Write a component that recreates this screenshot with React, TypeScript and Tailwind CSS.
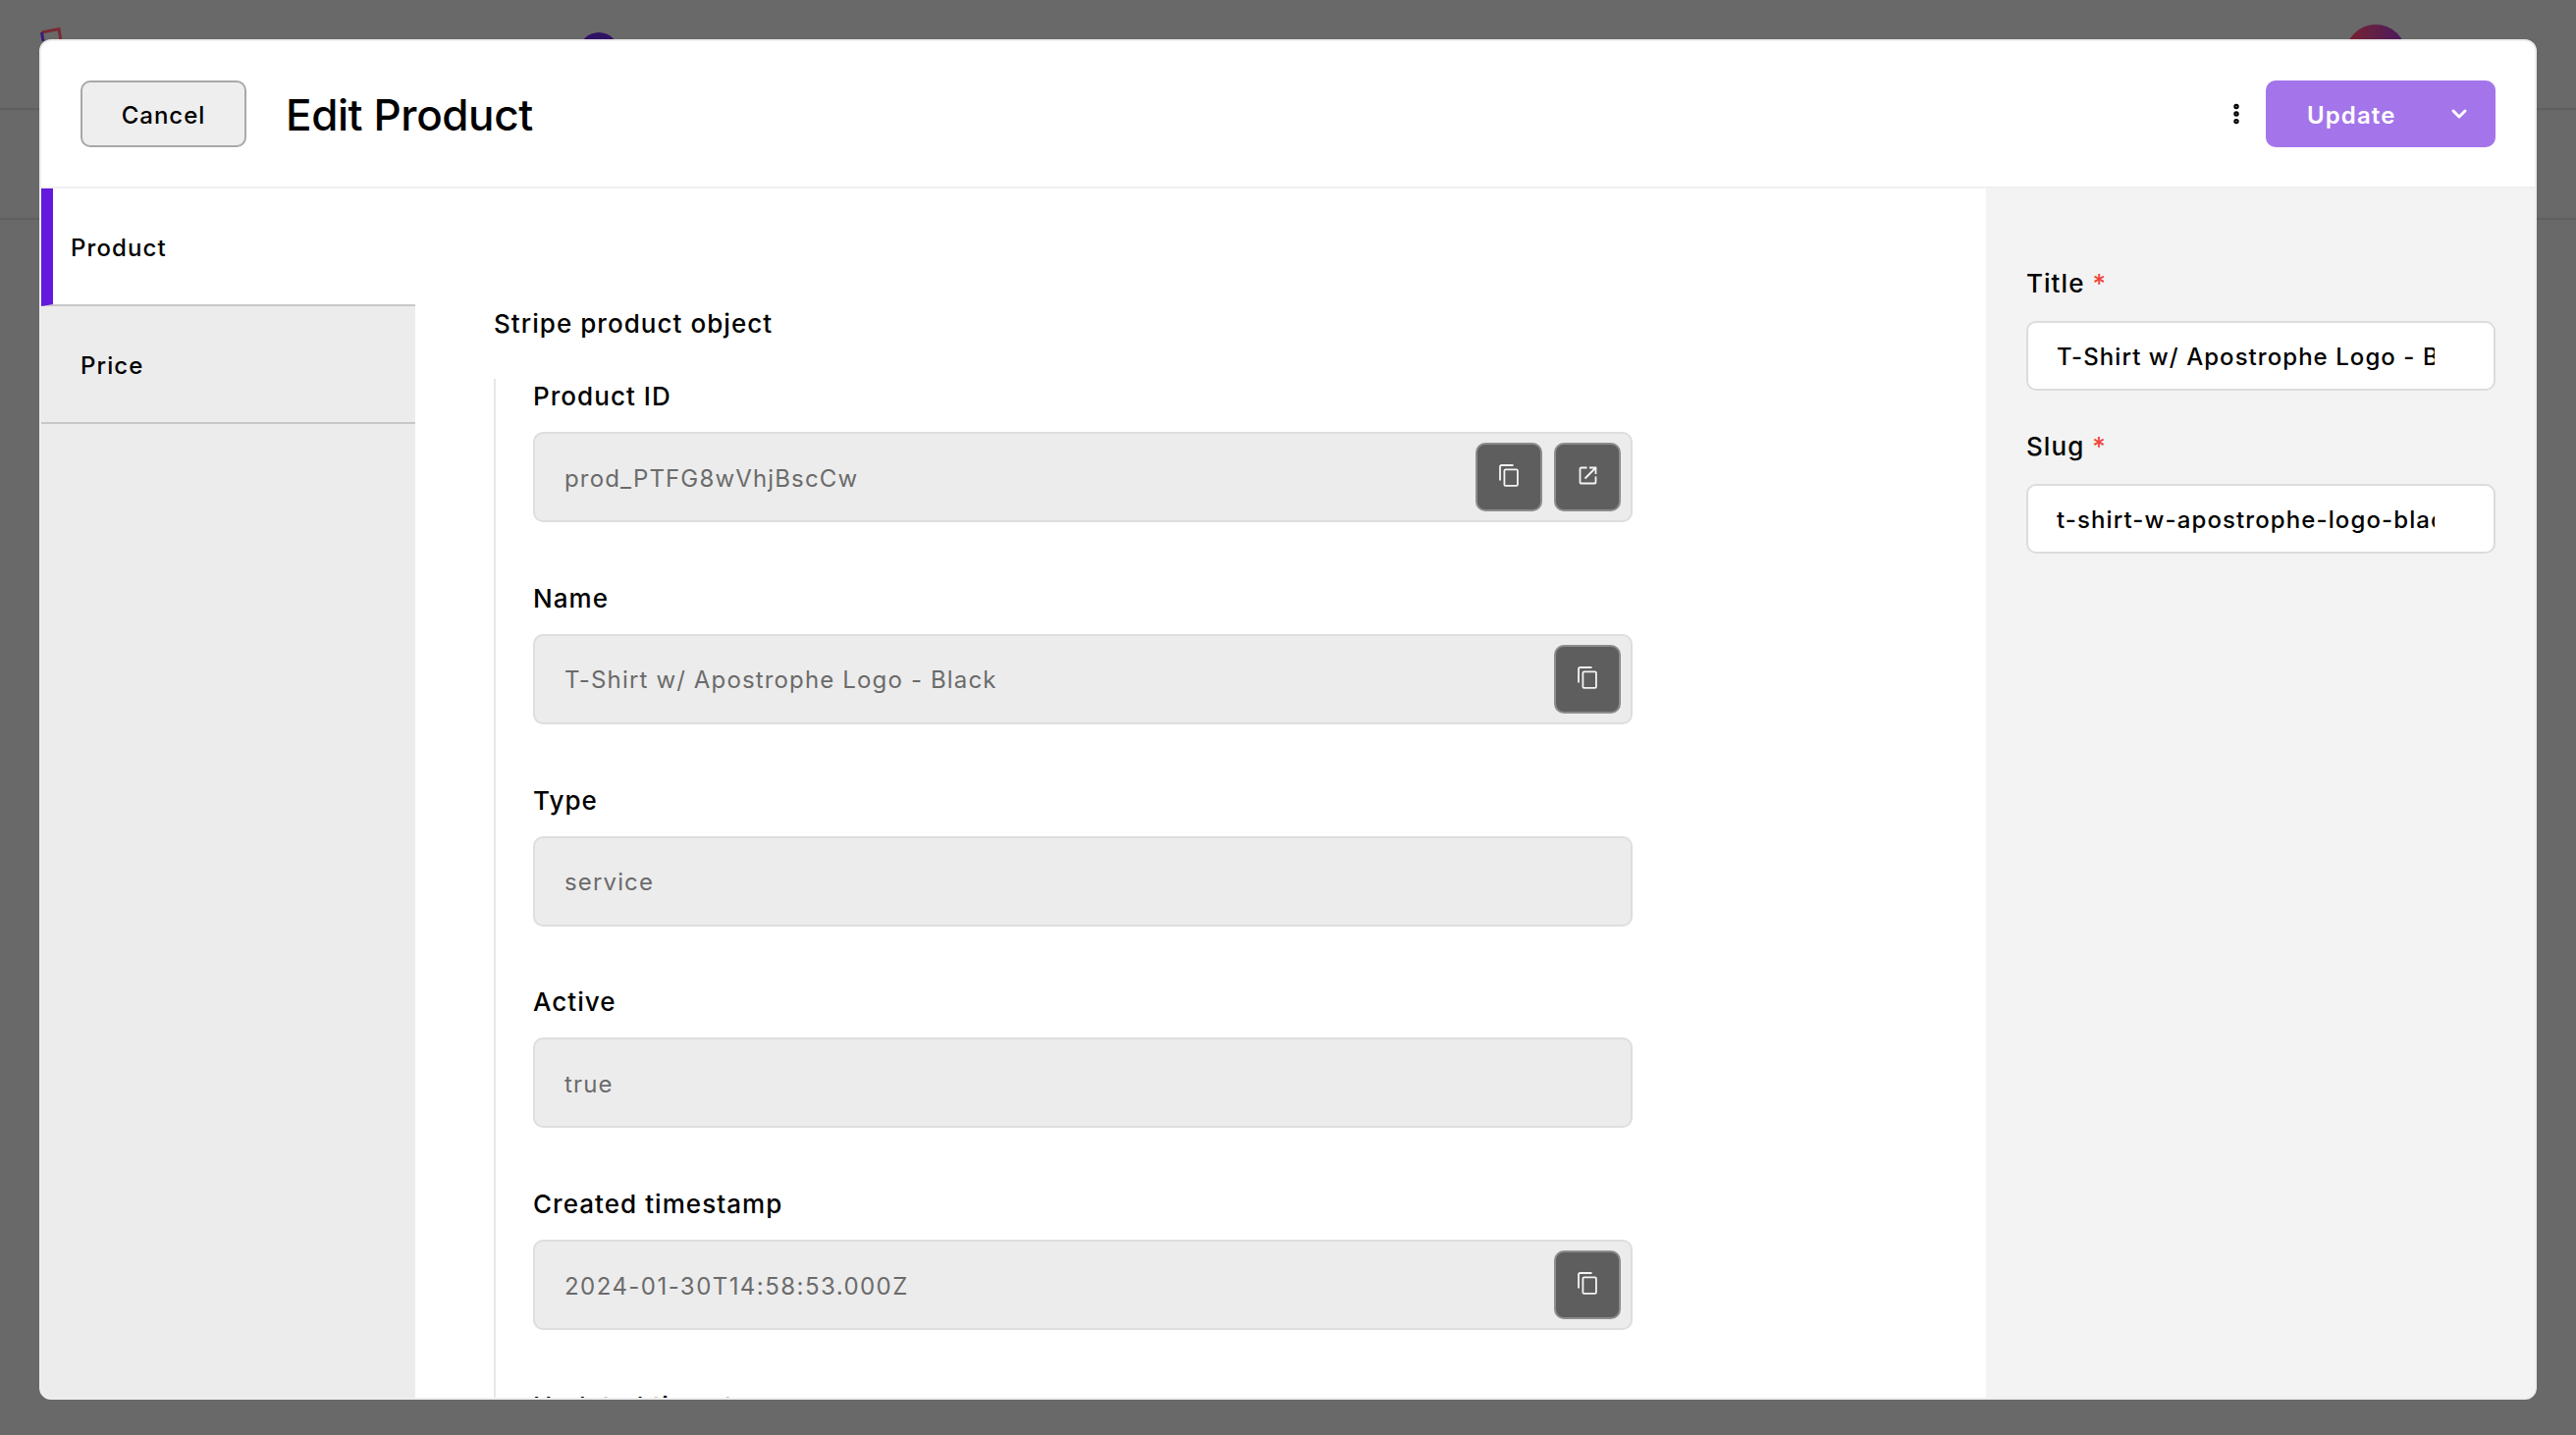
import { ChevronDown, EllipsisVertical } from "lucide-react";

function IconButton({ kind }: { kind: "copy" | "open" }) {
  return (
    <button className="flex h-[70px] w-[68px] items-center justify-center rounded-[10px] border-2 border-[#8c8c8c] bg-[#5e5e5e] pb-[3px] text-[#f4f4f4]">
      {kind === "copy" ? (
        <svg width="20" height="23" viewBox="0 0 20 23" fill="none" stroke="currentColor" strokeWidth="1.8">
          <rect x="5.400" y="5.400" width="13.500" height="16.500" rx="1.200" />
          <path d="M14.500 1H2.500A1.500 1.500 0 0 0 1 2.500V16.500" />
        </svg>
      ) : (
        <svg width="19" height="19" viewBox="0 0 19 19" fill="none" stroke="currentColor" strokeWidth="1.8">
          <path d="M8.500 1.500H2.500a1 1 0 0 0-1 1v14a1 1 0 0 0 1 1h14a1 1 0 0 0 1-1v-6" />
          <path d="M6.500 12.500 17.500 1.500M11 1.500h6.500V8" />
        </svg>
      )}
    </button>
  );
}

function ReadOnlyField({
  label,
  value,
  actions = [],
  tracking = "tracking-[1.15px]",
}: {
  label: string;
  value: string;
  actions?: ("copy" | "open")[];
  tracking?: string;
}) {
  return (
    <div className="flex flex-col">
      <label className="h-[34px] text-[26px] leading-[35px] font-medium tracking-[1.05px] text-black">{label}</label>
      <div className="mt-[20px] flex h-[92px] w-[1120px] items-center justify-between rounded-[10px] border-2 border-[#dedede] bg-[#ececec] pr-[10px] pl-[30px]">
        <span className={`pt-[3px] text-[24px] text-[#6b6b6b] ${tracking}`}>{value}</span>
        <div className="flex gap-[12px]">
          {actions.map((a, i) => (
            <IconButton key={i} kind={a} />
          ))}
        </div>
      </div>
    </div>
  );
}

function TextField({ label, value, tracking }: { label: string; value: string; tracking: string }) {
  return (
    <div className="flex flex-col">
      <label className="h-[34px] text-[26px] leading-[35px] font-medium tracking-[1.05px] text-black">
        {label} <span className="text-[#f04438]">*</span>
      </label>
      <div className="mt-[22px] flex h-[71px] w-[478px] items-center rounded-[10px] border-2 border-[#dcdcdc] bg-white pl-[29px]">
        <span className={`w-[385px] overflow-hidden pt-[2px] text-[24px] font-medium whitespace-nowrap text-black ${tracking}`}>{value}</span>
      </div>
    </div>
  );
}

export default function App() {
  return (
    <div className="relative h-[1462px] w-[2624px] overflow-hidden bg-[#696969] font-['Inter',sans-serif]">
      {/* page behind the dialog */}
      <div className="h-[112px] border-b-2 border-[#5f5f5f]" />
      <div className="h-[112px] border-b-2 border-[#5f5f5f]" />
      <svg className="absolute top-[26px] left-[38px]" width="28" height="18" viewBox="0 0 28 18" fill="none" strokeWidth="3">
        <path d="M4.500 7 22 3.500 24 16" stroke="#7a2a33" />
        <path d="M4.500 7 6 16" stroke="#3c1a78" />
      </svg>
      <div className="absolute top-[33px] left-[590px] h-[40px] w-[40px] rounded-full bg-[#2f1365]" />
      <div className="absolute top-[25px] left-[2389px] h-[62px] w-[62px] rounded-full bg-gradient-to-r from-[#7a1f28] to-[#4a1560]" />

      <div className="absolute top-[40px] left-[40px] flex h-[1386px] w-[2544px] flex-col overflow-hidden rounded-[12px] border-2 border-[#eeeeee] bg-white">
        <header className="flex h-[150px] shrink-0 items-center justify-between border-b-2 border-[#efefef] px-[40px]">
          <div className="flex items-center gap-[40px]">
            <button className="flex h-[68px] w-[169px] items-center justify-center rounded-[10px] border-2 border-[#a8a8a8] bg-[#eeeeee] pt-[3px] text-[24px] font-medium tracking-[1px] text-black">
              Cancel
            </button>
            <h1 className="pt-[2px] text-[44px] font-medium tracking-[-0.4px] text-black">Edit Product</h1>
          </div>
          <div className="flex items-center gap-[17px]">
            <EllipsisVertical size={26} strokeWidth={3} className="text-black" />
            <button className="flex h-[68px] w-[234px] items-center justify-between rounded-[10px] bg-[#a475ea] pr-[25px] pl-[42px] text-[24px] font-semibold tracking-[1.1px] text-white">
              <span className="pt-[3px]">Update</span>
              <ChevronDown size={24} strokeWidth={3} />
            </button>
          </div>
        </header>

        <div className="flex min-h-0 flex-1">
          <aside className="w-[381px] shrink-0 bg-[#ececec]">
            <div className="flex h-[120px] items-center border-b-2 border-l-[12px] border-b-[#c8c8c8] border-l-[#6419dc] bg-white pt-[3px] pl-[18px] text-[24px] font-medium tracking-[1.1px] text-black">
              Product
            </div>
            <div className="flex h-[120px] items-center border-b-2 border-[#c8c8c8] pt-[3px] pl-[40px] text-[24px] font-medium tracking-[1.1px] text-black">
              Price
            </div>
          </aside>

          <main className="min-h-0 w-[1600px] overflow-hidden pt-[121px] pl-[80px]">
            <h2 className="h-[34px] text-[26px] leading-[34px] font-medium tracking-[1.05px] text-black">Stripe product object</h2>
            <div className="mt-[39px] flex flex-col gap-[59.750px] border-l-2 border-[#e8e8e8] pl-[38px]">
              <ReadOnlyField label="Product ID" value="prod_PTFG8wVhjBscCw" actions={["copy", "open"]} />
              <ReadOnlyField label="Name" value="T-Shirt w/ Apostrophe Logo - Black" actions={["copy"]} />
              <ReadOnlyField label="Type" value="service" />
              <ReadOnlyField label="Active" value="true" />
              <ReadOnlyField label="Created timestamp" value="2024-01-30T14:58:53.000Z" actions={["copy"]} tracking="tracking-[1.45px]" />
              <ReadOnlyField label="Updated timestamp" value="2024-01-30T14:58:53.000Z" actions={["copy"]} tracking="tracking-[1.45px]" />
            </div>
          </main>

          <aside className="flex-1 bg-[#f3f3f3] pt-[79px] pl-[41px]">
            <div className="flex flex-col gap-[39px]">
              <TextField label="Title" value="T-Shirt w/ Apostrophe Logo - Black" tracking="tracking-[1.05px]" />
              <TextField label="Slug" value="t-shirt-w-apostrophe-logo-black" tracking="tracking-[1.1px]" />
            </div>
          </aside>
        </div>
      </div>
    </div>
  );
}
